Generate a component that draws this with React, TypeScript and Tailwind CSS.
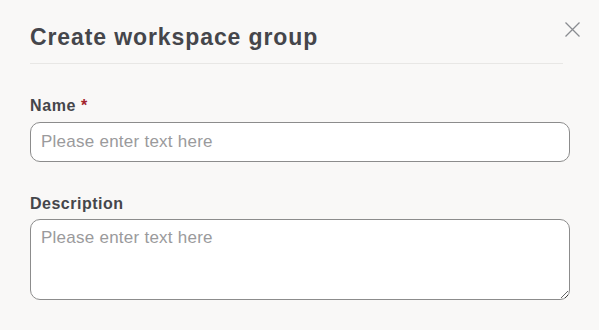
import React, { useState } from 'react';

const CreateGroupDialog: React.FC = () => {
  const [name, setName] = useState('');
  const [description, setDescription] = useState('');

  return (
    <div className="min-h-screen w-full bg-[#f9f8f7] font-['Liberation_Sans',Arial,sans-serif]">
      <div className="flex flex-col pl-[30px] pr-[29px] pt-[23px]">
        <div className="flex items-start">
          <div className="flex-1 border-b border-[#e8e7e5] pb-[12px]">
            <h1 className="text-[23px] font-bold leading-[28px] tracking-[0.9px] text-[#45464b]">Create workspace group</h1>
          </div>
          <button className="ml-[2px] mr-[-10px] mt-[-1px] flex h-[15px] w-[15px] items-center justify-center text-[#8a8c91]">
            <svg width="15" height="15" viewBox="0 0 15 15" fill="none" stroke="currentColor" strokeWidth="1.3">
              <path d="M0.5 0.5 L14.5 14.5 M14.5 0.5 L0.5 14.5" />
            </svg>
          </button>
        </div>

        <label className="mt-[32px] text-[16px] font-bold leading-[20px] tracking-[0.6px] text-[#45464b]">
          Name <span className="text-[#a3232c]">*</span>
        </label>
        <input
          type="text"
          value={name}
          onChange={(e) => setName(e.target.value)}
          placeholder="Please enter text here"
          className="mt-[6px] h-[40px] w-full rounded-[10px] border border-[#8c8c8c] bg-white px-[10px] text-[17px] tracking-[0.25px] text-[#45464b] outline-none placeholder:text-[#9a9a9c]"
        />

        <label className="mt-[32px] text-[16px] font-bold leading-[20px] tracking-[0.5px] text-[#45464b]">Description</label>
        <textarea
          value={description}
          onChange={(e) => setDescription(e.target.value)}
          placeholder="Please enter text here"
          className="mt-[5px] h-[81px] w-full rounded-[10px] border border-[#8c8c8c] bg-white px-[10px] py-[8px] text-[17px] leading-[20px] tracking-[0.25px] text-[#45464b] outline-none placeholder:text-[#9a9a9c]"
        />
      </div>
    </div>
  );
};

export default CreateGroupDialog;
